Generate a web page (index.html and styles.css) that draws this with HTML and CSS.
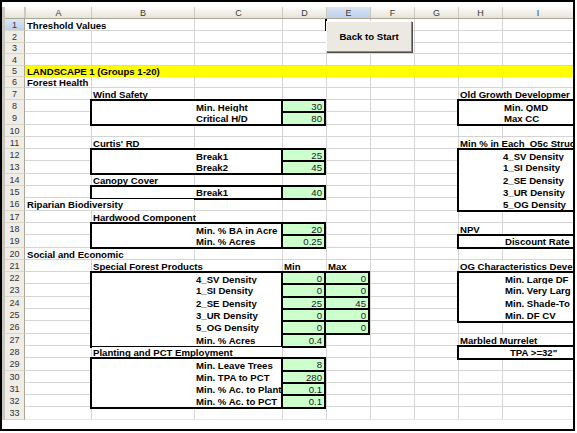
FILE: index.html
```html
<!DOCTYPE html>
<html>
<head>
<meta charset="utf-8">
<title>Threshold Values</title>
<link rel="stylesheet" href="styles.css">
</head>
<body>
<div class="frame">
<div class="sheet">
<div class="hdr"><div class="corner"></div><div class="ch">A</div><div class="ch">B</div><div class="ch">C</div><div class="ch">D</div><div class="ch sel">E</div><div class="ch">F</div><div class="ch">G</div><div class="ch">H</div><div class="ch">I</div></div>

<div class="row"><div class="rh sel">1</div><div class="c cA s2 ov">Threshold Values</div><div class="c cE act"></div></div>
<div class="row"><div class="rh">2</div></div>
<div class="row h11"><div class="rh">3</div></div>
<div class="row"><div class="rh">4</div></div>
<div class="row h11"><div class="rh">5</div><div class="c all y">LANDSCAPE 1 (Groups 1-20)</div></div>
<div class="row h11"><div class="rh">6</div><div class="c cA">Forest Health</div></div>
<div class="row"><div class="rh">7</div><div class="c cB">Wind Safety</div><div class="c cH s2 ov">Old Growth Developmer</div></div>

<div class="row"><div class="rh">8</div><div class="c cB w L T"></div><div class="c cC w T">Min. Height</div><div class="c cD g">30</div><div class="c cH w L T"></div><div class="c cI w T">Min. QMD</div></div>
<div class="row h13"><div class="rh">9</div><div class="c cB w L B"></div><div class="c cC w B">Critical H/D</div><div class="c cD g">80</div><div class="c cH w L B"></div><div class="c cI w B">Max CC</div></div>
<div class="row"><div class="rh">10</div></div>
<div class="row"><div class="rh">11</div><div class="c cB">Curtis' RD</div><div class="c cH s2 ov">Min % in Each&nbsp; O5c Struc</div></div>
<div class="row"><div class="rh">12</div><div class="c cB w L T"></div><div class="c cC w T">Break1</div><div class="c cD g">25</div><div class="c cH w L T"></div><div class="c cI w T i1">4_SV Density</div></div>
<div class="row h13"><div class="rh">13</div><div class="c cB w L B"></div><div class="c cC w B">Break2</div><div class="c cD g">45</div><div class="c cH w L"></div><div class="c cI w i1">1_SI Density</div></div>
<div class="row"><div class="rh">14</div><div class="c cB">Canopy Cover</div><div class="c cH w L"></div><div class="c cI w i1">2_SE Density</div></div>
<div class="row"><div class="rh">15</div><div class="c cB w L T B"></div><div class="c cC w T B">Break1</div><div class="c cD g">40</div><div class="c cH w L"></div><div class="c cI w i1">3_UR Density</div></div>
<div class="row h13"><div class="rh">16</div><div class="c cA s2 ov">Riparian Biodiversity</div><div class="c cH w L B"></div><div class="c cI w B i1">5_OG Density</div></div>
<div class="row"><div class="rh">17</div><div class="c cB s2 ov">Hardwood Component</div></div>
<div class="row"><div class="rh">18</div><div class="c cB w L T"></div><div class="c cC w T">Min. % BA in Acre</div><div class="c cD g">20</div><div class="c cH">NPV</div></div>
<div class="row h13"><div class="rh">19</div><div class="c cB w L B"></div><div class="c cC w B">Min. % Acres</div><div class="c cD g">0.25</div><div class="c cH w L T B"></div><div class="c cI w T B i3">Discount Rate</div></div>
<div class="row"><div class="rh">20</div><div class="c cA s2 ov">Social and Economic</div></div>
<div class="row"><div class="rh">21</div><div class="c cB s2 ov">Special Forest Products</div><div class="c cD">Min</div><div class="c cE">Max</div><div class="c cH s2 ov">OG Characteristics Deve</div></div>
<div class="row"><div class="rh">22</div><div class="c cB w L T"></div><div class="c cC w T">4_SV Density</div><div class="c cD g">0</div><div class="c cE g">0</div><div class="c cH w L T"></div><div class="c cI w T i3">Min. Large DF</div></div>
<div class="row h13"><div class="rh">23</div><div class="c cB w L"></div><div class="c cC w">1_SI Density</div><div class="c cD g">0</div><div class="c cE g">0</div><div class="c cH w L"></div><div class="c cI w i3">Min. Very Larg</div></div>
<div class="row"><div class="rh">24</div><div class="c cB w L"></div><div class="c cC w">2_SE Density</div><div class="c cD g">25</div><div class="c cE g">45</div><div class="c cH w L"></div><div class="c cI w i3">Min. Shade-To</div></div>
<div class="row"><div class="rh">25</div><div class="c cB w L"></div><div class="c cC w">3_UR Density</div><div class="c cD g">0</div><div class="c cE g">0</div><div class="c cH w L B"></div><div class="c cI w B i3">Min. DF CV</div></div>
<div class="row h13"><div class="rh">26</div><div class="c cB w L"></div><div class="c cC w">5_OG Density</div><div class="c cD g">0</div><div class="c cE g">0</div></div>
<div class="row"><div class="rh">27</div><div class="c cB w L B"></div><div class="c cC w B">Min. % Acres</div><div class="c cD g">0.4</div><div class="c cH s2 ov">Marbled Murrelet</div></div>
<div class="row"><div class="rh">28</div><div class="c cB s2 ov">Planting and PCT Employment</div><div class="c cH w L T B"></div><div class="c cI w T B i8">TPA &gt;=32"</div></div>
<div class="row h13"><div class="rh">29</div><div class="c cB w L T"></div><div class="c cC w T">Min. Leave Trees</div><div class="c cD g">8</div></div>
<div class="row"><div class="rh">30</div><div class="c cB w L"></div><div class="c cC w">Min. TPA to PCT</div><div class="c cD g">280</div></div>
<div class="row"><div class="rh">31</div><div class="c cB w L"></div><div class="c cC w clip">Min. % Ac. to Plant</div><div class="c cD g">0.1</div></div>
<div class="row"><div class="rh">32</div><div class="c cB w L B"></div><div class="c cC w B">Min. % Ac. to PCT</div><div class="c cD g">0.1</div></div>
<div class="row h13 last"><div class="rh">33</div></div>

<button class="btn">Back to Start</button>
</div>
</div>
</body>
</html>
```

FILE: styles.css
```css
* { box-sizing: border-box; }
html, body { margin: 0; background: #fff; }
body { font-family: "Liberation Sans", Arial, sans-serif; }

.frame {
  width: 575px;
  height: 431px;
  border: 2px solid #000;
  overflow: hidden;
  background: #fff;
}

.sheet {
  position: relative;
  margin-top: 5px;
  border-left: 3px solid #c9c7bd;
  --vl: linear-gradient(to right,
    transparent 86px, #d4d4d4 86px 87px,
    transparent 87px 189px, #d4d4d4 189px 190px,
    transparent 190px 277px, #d4d4d4 277px 278px,
    transparent 278px 321px, #d4d4d4 321px 322px,
    transparent 322px 365px, #d4d4d4 365px 366px,
    transparent 366px 409px, #d4d4d4 409px 410px,
    transparent 410px 453px, #d4d4d4 453px 454px,
    transparent 454px 497px, #d4d4d4 497px 498px,
    transparent 498px);
}

.hdr, .row {
  display: grid;
  grid-template-columns: 20px 66px 103px 88px 44px 44px 44px 44px 44px 71px;
  white-space: nowrap;
}

.hdr {
  height: 12px;
  background: linear-gradient(#fcfcfa, #e6e3d8);
  border-bottom: 1px solid #a9a697;
}
.corner { border-right: 1px solid #cdcabd; }
.ch {
  display: flex;
  align-items: center;
  justify-content: center;
  border-left: 1px solid #cdcabd;
  font-size: 9px;
  color: #3a3a3a;
}

.row {
  --gl: #d4d4d4;
  height: 12px;
  font-size: 9.6px;
  font-weight: bold;
  color: #000;
  background: linear-gradient(var(--gl), var(--gl)) 0 100% / 100% 1px no-repeat, var(--vl);
}
.h11 { height: 11px; }
.h13 { height: 13px; }
.last { --gl: #efedb2; }

.rh {
  display: flex;
  align-items: center;
  justify-content: center;
  background: #efede5;
  border-right: 1px solid #a9a697;
  border-bottom: 1px solid #d9d6ca;
  font-weight: normal;
  font-size: 9px;
  color: #333;
}
.sel { background: linear-gradient(#dbe6f5, #bccfea); }

.c { display: flex; align-items: center; padding-left: 2px; }
.cA { grid-column: 2; }
.cB { grid-column: 3; }
.cC { grid-column: 4; }
.cD { grid-column: 5; }
.cE { grid-column: 6; }
.cH { grid-column: 9; }
.cI { grid-column: 10; }
.s2 { grid-column-end: span 2; }
.all { grid-column: 2 / -1; }

.y { background: #ffff00; }
.ov { background: linear-gradient(#fff, #fff) 1px 1px / calc(100% - 1px) calc(100% - 2px) no-repeat; }
.w { background: #fff; }

.L { border-left: 2px solid #000; margin-left: -1px; }
.T { border-top: 2px solid #000; margin-top: -1px; }
.B { border-bottom: 2px solid #000; margin-bottom: -1px; }

.g {
  background: #ccffcc;
  border: 2px solid #000;
  margin: -1px 0 -1px -1px;
  justify-content: flex-end;
  padding: 0 2px 0 0;
  font-weight: normal;
  color: #1a1a1a;
}
.g.cE { border-left: 0; margin-left: 0; }

.clip { overflow: hidden; }
.i1 { padding-left: 1px; }
.i3 { padding-left: 3px; }
.i8 { padding-left: 8px; }

.act { border-left: 2px solid #000; margin-left: -1px; }

.btn {
  position: absolute;
  left: 321px;
  top: 14px;
  width: 86px;
  height: 31px;
  padding: 0;
  background: #ebe9e2;
  border: 1px solid;
  border-color: #fdfdfb #8d8a7e #8d8a7e #fdfdfb;
  box-shadow: 1px 1px 0 #4f4e48;
  font: bold 9.6px "Liberation Sans", Arial, sans-serif;
  color: #000;
}
```
